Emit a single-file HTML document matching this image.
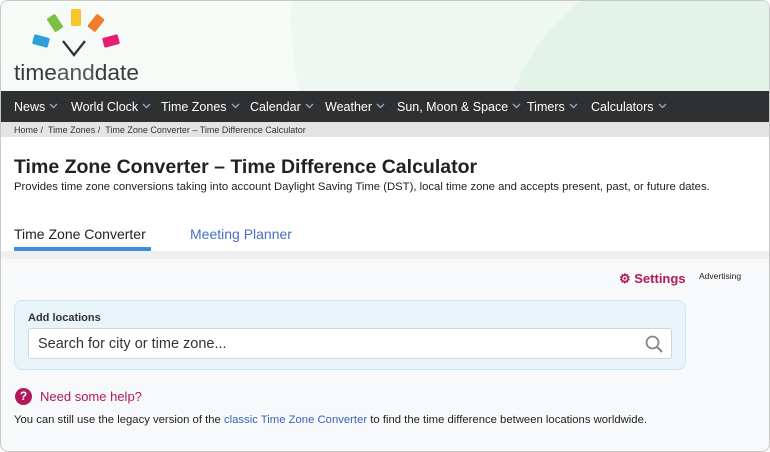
<!DOCTYPE html>
<html><head><style>
*{margin:0;padding:0;box-sizing:border-box}
body{width:770px;height:452px;overflow:hidden;font-family:"Liberation Sans",sans-serif;background:#fff}
.frame{position:absolute;left:0;top:0;width:770px;height:452px;border:1px solid #c8c8c8;border-radius:8px;overflow:hidden;background:#f8f9fb}
.hdr{position:absolute;left:0;top:0;width:770px;height:90px;background:#f6fbf8;overflow:hidden}
.c1{position:absolute;left:290px;top:-260px;width:560px;height:560px;border-radius:50%;background:#eef7f1}
.c2{position:absolute;left:500px;top:-40px;width:400px;height:400px;border-radius:50%;background:#e3f3ea}
.nav{position:absolute;top:90px;left:0;width:770px;height:31px;background:#2f3032;color:#fff;font-size:12.5px}
.nav span{position:absolute;top:9px;white-space:nowrap}
.nav svg{margin-left:4px;vertical-align:2px}
.bc{position:absolute;top:121px;left:0;width:770px;height:15px;background:#e4e4e4;font-size:9px;color:#333;padding:3px 0 0 13px}
.main{position:absolute;top:136px;left:0;width:770px;height:114px;background:#fff}
h1{position:absolute;left:13px;top:19px;font-size:19.5px;color:#222}
.sub{position:absolute;left:13px;top:44px;font-size:11.3px;color:#222;white-space:nowrap}
.tab{position:absolute;top:89px;font-size:14px}
.ul{position:absolute;left:13px;top:110px;width:137px;height:4px;background:#3f8edb}
.band{position:absolute;top:250px;left:0;width:770px;height:8px;background:#f0f0f0}
.box{position:absolute;left:13px;top:299px;width:672px;height:70px;border:1px solid #cfe6f2;border-radius:8px;background:#e8f3fa}
.inp{position:absolute;left:13px;top:27px;width:644px;height:31px;border:1px solid #d4d4d4;border-radius:3px;background:#fff;font-size:14.5px;color:#333;padding:7px 0 0 9px}
</style></head><body><div class="frame">
<div class="hdr"><div class="c1"></div><div class="c2"></div>
<svg style="position:absolute;left:0;top:0" width="160" height="90">
<rect x="70" y="8" width="10" height="17" rx="1.5" fill="#f8c52a"/>
<rect x="49" y="14" width="10" height="16" rx="1.5" fill="#7cbf42" transform="rotate(-33 54 22)"/>
<rect x="90" y="14" width="10" height="16" rx="1.5" fill="#ee7e2d" transform="rotate(38 95 22)"/>
<rect x="32" y="35" width="16" height="10" rx="1.5" fill="#2c9fdc" transform="rotate(15 40 40)"/>
<rect x="102" y="35" width="16" height="10" rx="1.5" fill="#e71f71" transform="rotate(-15 110 40)"/>
<path d="M62 40 L73 54 L84 40" fill="none" stroke="#333" stroke-width="2.3"/>
<text x="13" y="79" font-family="Liberation Sans" font-size="22" fill="#3a3a3a" textLength="125" lengthAdjust="spacingAndGlyphs">time<tspan fill="#555">and</tspan>date</text>
</svg></div>
<div class="nav">
<span style="left:13px">News<svg width="9" height="6"><path d="M1 1 L4.5 4.5 L8 1" fill="none" stroke="#8fa6c8" stroke-width="1.4"/></svg></span>
<span style="left:70px">World Clock<svg width="9" height="6"><path d="M1 1 L4.5 4.5 L8 1" fill="none" stroke="#8fa6c8" stroke-width="1.4"/></svg></span>
<span style="left:160px">Time Zones<svg width="9" height="6"><path d="M1 1 L4.5 4.5 L8 1" fill="none" stroke="#8fa6c8" stroke-width="1.4"/></svg></span>
<span style="left:249px">Calendar<svg width="9" height="6"><path d="M1 1 L4.5 4.5 L8 1" fill="none" stroke="#8fa6c8" stroke-width="1.4"/></svg></span>
<span style="left:324px">Weather<svg width="9" height="6"><path d="M1 1 L4.5 4.5 L8 1" fill="none" stroke="#8fa6c8" stroke-width="1.4"/></svg></span>
<span style="left:396px">Sun, Moon &amp; Space<svg width="9" height="6"><path d="M1 1 L4.5 4.5 L8 1" fill="none" stroke="#8fa6c8" stroke-width="1.4"/></svg></span>
<span style="left:526px">Timers<svg width="9" height="6"><path d="M1 1 L4.5 4.5 L8 1" fill="none" stroke="#8fa6c8" stroke-width="1.4"/></svg></span>
<span style="left:590px">Calculators<svg width="9" height="6"><path d="M1 1 L4.5 4.5 L8 1" fill="none" stroke="#8fa6c8" stroke-width="1.4"/></svg></span>
</div>
<div class="bc">Home / &nbsp;Time Zones / &nbsp;Time Zone Converter – Time Difference Calculator</div>
<div class="main">
<h1>Time Zone Converter – Time Difference Calculator</h1>
<div class="sub">Provides time zone conversions taking into account Daylight Saving Time (DST), local time zone and accepts present, past, or future dates.</div>
<div class="tab" style="left:13px;color:#222">Time Zone Converter</div>
<div class="tab" style="left:189px;color:#4a6fc0">Meeting Planner</div>
<div class="ul"></div>
</div>
<div class="band"></div>
<div style="position:absolute;left:618px;top:270px;font-size:13px;font-weight:bold;color:#b0195c">⚙ Settings</div>
<div style="position:absolute;left:698px;top:270px;font-size:8.5px;color:#222">Advertising</div>
<div class="box"><div style="position:absolute;left:13px;top:11px;font-size:11px;font-weight:bold;color:#333">Add locations</div>
<div class="inp">Search for city or time zone...
<svg style="position:absolute;right:8px;top:6px" width="18" height="18"><circle cx="7.5" cy="7.5" r="6" fill="none" stroke="#888" stroke-width="1.8"/><path d="M12 12 L17 17" stroke="#888" stroke-width="2"/></svg></div></div>
<div style="position:absolute;left:14px;top:387px;width:17px;height:17px;border-radius:50%;background:#b0195c;color:#fff;font-size:12px;font-weight:bold;text-align:center;line-height:17px">?</div>
<div style="position:absolute;left:39px;top:388px;font-size:13px;color:#b0195c">Need some help?</div>
<div style="position:absolute;left:13px;top:413px;font-size:11.3px;color:#222;white-space:nowrap">You can still use the legacy version of the <span style="color:#3a63b8">classic Time Zone Converter</span> to find the time difference between locations worldwide.</div>
</div></body></html>
